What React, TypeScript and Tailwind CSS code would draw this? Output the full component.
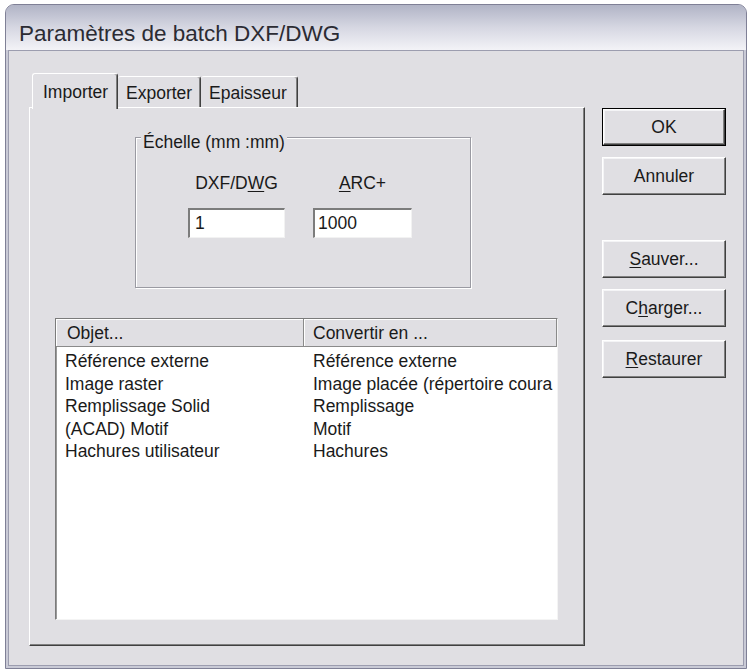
import React from "react";

const FONT = { fontFamily: '"Liberation Sans", Arial, sans-serif' };

type Row = { obj: string; conv: string };

const ROWS: Row[] = [
  { obj: "Référence externe", conv: "Référence externe" },
  { obj: "Image raster", conv: "Image placée (répertoire coura" },
  { obj: "Remplissage Solid", conv: "Remplissage" },
  { obj: "(ACAD) Motif", conv: "Motif" },
  { obj: "Hachures utilisateur", conv: "Hachures" },
];

// classic raised 3D edge
const raised =
  "border border-t-white border-l-white border-r-[#404040] border-b-[#404040] shadow-[inset_-1px_-1px_0_#808080,inset_1px_1px_0_#f4f4f6]";

function Btn({
  children,
  className = "",
  isDefault = false,
}: {
  children: React.ReactNode;
  className?: string;
  isDefault?: boolean;
}) {
  if (isDefault) {
    return (
      <div className={`w-[124px] h-[38px] border border-black ${className}`}>
        <div
          className={`w-full h-full flex items-center justify-center bg-[#e0dfe3] text-[#1a1a1a] ${raised}`}
        >
          {children}
        </div>
      </div>
    );
  }
  return (
    <div
      className={`w-[124px] h-[38px] flex items-center justify-center bg-[#e0dfe3] text-[#1a1a1a] ${raised} ${className}`}
    >
      {children}
    </div>
  );
}

function Tab({
  label,
  width,
  selected = false,
}: {
  label: string;
  width: number;
  selected?: boolean;
}) {
  return (
    <div
      style={{ width }}
      className={
        selected
          ? "relative z-10 -mb-[2px] ml-[3px] h-[36px] bg-[#e0dfe3] border-t border-l border-r border-t-white border-l-white border-r-[#404040] rounded-t-[3px] shadow-[inset_-1px_0_0_#808080] pl-[10px] pt-[7px] leading-[22px]"
          : "h-[31px] bg-[#e0dfe3] border-t border-r border-t-white border-r-[#404040] rounded-t-[3px] shadow-[inset_-1px_0_0_#808080] pl-[8px] pt-[5px] leading-[22px]"
      }
    >
      {label}
    </div>
  );
}

export default function App() {
  return (
    <div
      className="w-[748px] h-[670px] bg-white pl-[5px] pt-[4px] text-[17.5px] text-[#1a1a1a]"
      style={FONT}
    >
      <div className="w-[742px] h-[665px] flex flex-col rounded-t-[9px] border border-[#7f8096] overflow-hidden bg-[#c9cad6]">
        {/* title bar */}
        <div className="h-[45px] shrink-0 bg-gradient-to-b from-[#b1b4c6] via-[#d6d7e2] to-[#f3f3f7] pl-[13px] pt-[13px]">
          <div className="leading-[31px] text-[22.5px] text-[#2b2b33]">
            Paramètres de batch DXF/DWG
          </div>
        </div>

        {/* client area */}
        <div className="flex-1 px-[2px] pb-[2px]">
          <div className="h-full border border-[#9c9daf] bg-[#e0dfe3] flex pl-[20px] pt-[22px]">
            {/* tabs + page */}
            <div className="w-[556px] flex flex-col">
              <div className="flex items-end h-[34px]">
                <Tab label="Importer" width={86} selected />
                <Tab label="Exporter" width={83} />
                <Tab label="Epaisseur" width={97} />
              </div>
              <div className="h-[539px] flex flex-col bg-[#e0dfe3] border border-t-white border-l-white border-r-[#404040] border-b-[#404040] shadow-[inset_-1px_-1px_0_#808080]">
                {/* group box */}
                <div className="relative ml-[105px] mt-[29px] w-[336px] h-[151px] border border-[#9a9aa2] shadow-[inset_1px_1px_0_#ffffff,1px_1px_0_#ffffff]">
                  <div className="absolute left-[5px] top-[-7px] px-[2px] bg-[#e0dfe3] leading-[22px]">
                    Échelle (mm :mm)
                  </div>
                  <div className="flex gap-[28px] pl-[52px] pt-[34px]">
                    <div className="w-[97px] flex flex-col">
                      <div className="text-center leading-[22px]">
                        DXF/D<u className="underline-offset-2">W</u>G
                      </div>
                      <div className="mt-[14px] h-[30px] flex items-center bg-white border-t-2 border-l-2 border-t-[#7c7c7c] border-l-[#7c7c7c] border-r border-b border-r-[#f2f2f2] border-b-[#f2f2f2] pl-[5px]">
                        1
                      </div>
                    </div>
                    <div className="w-[99px] flex flex-col">
                      <div className="text-center leading-[22px]">
                        <u className="underline-offset-2">A</u>RC+
                      </div>
                      <div className="mt-[14px] h-[30px] flex items-center bg-white border-t-2 border-l-2 border-t-[#7c7c7c] border-l-[#7c7c7c] border-r border-b border-r-[#f2f2f2] border-b-[#f2f2f2] pl-[3px]">
                        1000
                      </div>
                    </div>
                  </div>
                </div>

                {/* list */}
                <div className="ml-[25px] mt-[30px] w-[503px] h-[302px] bg-white border border-t-[#7b7b7b] border-l-[#7b7b7b] border-r-[#f4f4f4] border-b-[#f4f4f4] shadow-[inset_1px_1px_0_#9a9a9a] overflow-hidden flex flex-col">
                  <div className="flex h-[28px] shrink-0 leading-[22px]">
                    <div className="w-[248px] flex items-center pl-[11px] bg-[#e0dfe3] shadow-[inset_-1px_-1px_0_#8a8a8a,inset_1px_1px_0_#ffffff]">
                      Objet...
                    </div>
                    <div className="flex-1 flex items-center pl-[9px] bg-[#e0dfe3] shadow-[inset_-1px_-1px_0_#8a8a8a,inset_1px_1px_0_#ffffff]">
                      Convertir en ...
                    </div>
                  </div>
                  <div className="pt-[3px]">
                    {ROWS.map((r) => (
                      <div key={r.obj} className="flex leading-[22.5px] whitespace-nowrap">
                        <div className="w-[257px] pl-[9px]">{r.obj}</div>
                        <div className="flex-1">{r.conv}</div>
                      </div>
                    ))}
                  </div>
                </div>
              </div>
            </div>

            {/* buttons */}
            <div className="ml-[17px] mt-[35px] flex flex-col">
              <Btn isDefault>OK</Btn>
              <Btn className="mt-[11px]">Annuler</Btn>
              <Btn className="mt-[45px]">
                <span>
                  <u className="underline-offset-2">S</u>auver...
                </span>
              </Btn>
              <Btn className="mt-[11px]">
                <span>
                  C<u className="underline-offset-2">h</u>arger...
                </span>
              </Btn>
              <Btn className="mt-[13px]">
                <span>
                  <u className="underline-offset-2">R</u>estaurer
                </span>
              </Btn>
            </div>
          </div>
        </div>
      </div>
    </div>
  );
}
